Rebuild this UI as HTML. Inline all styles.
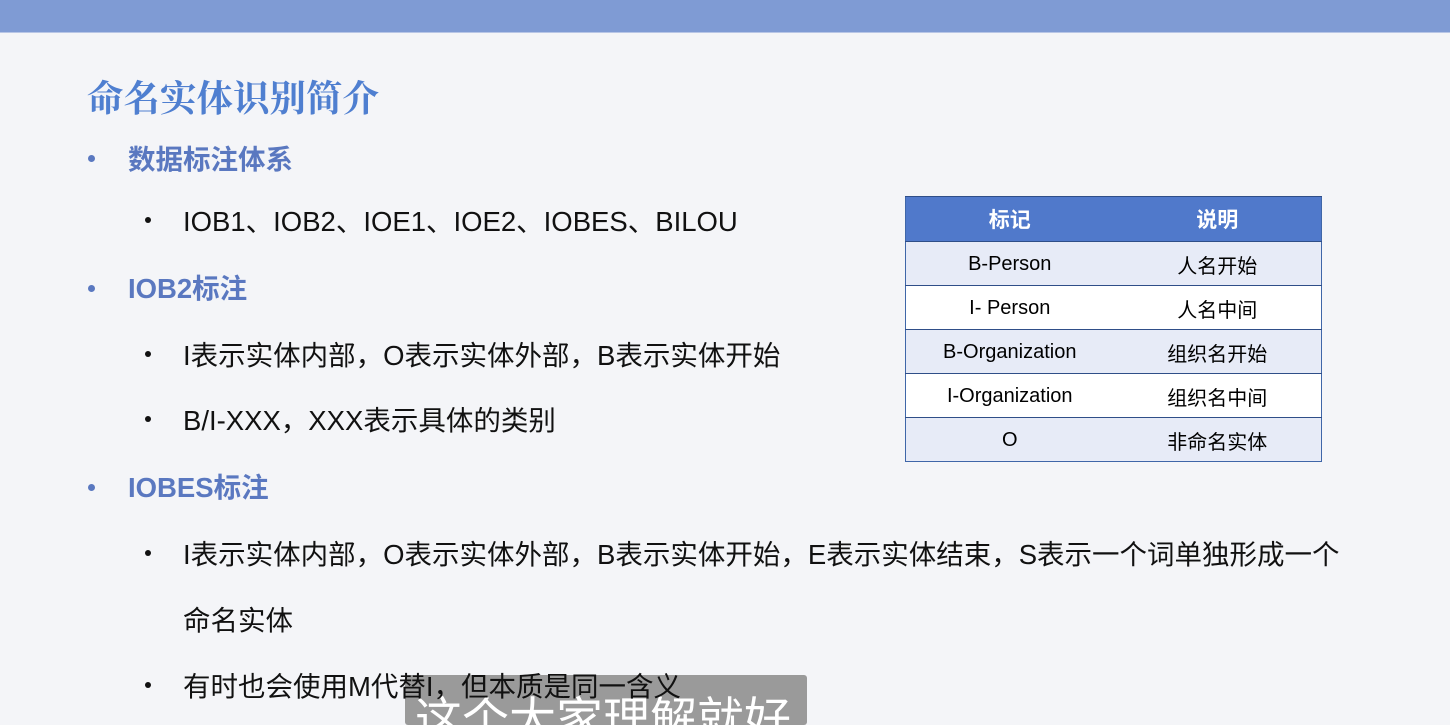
<!DOCTYPE html>
<html><head><meta charset="utf-8"><style>
body{margin:0;width:1450px;height:717px;overflow:hidden;background:#f4f5f8;position:relative;font-family:"Liberation Sans","Noto Sans CJK SC",sans-serif;}
.bar{position:absolute;left:0;top:0;width:1450px;height:32px;background:#7f9bd4;border-bottom:1px solid #b8c6e6;}
.t{position:absolute;white-space:nowrap;z-index:2;}
.title{left:87px;top:70px;font-family:"Noto Serif CJK SC",serif;font-weight:bold;font-size:36.5px;color:#4f7fd0;}
.h{font-size:27.5px;font-weight:bold;color:#5a78c0;}
.b{font-size:27.5px;color:#111;}
.dot1{position:absolute;width:7px;height:7px;border-radius:50%;background:#5a78c0;}
.dot2{position:absolute;width:6px;height:6px;border-radius:50%;background:#111;}
table{position:absolute;left:905px;top:196px;width:417px;border-collapse:collapse;border:1px solid #3f66a8;font-size:20px;table-layout:fixed;}
td,th{text-align:center;padding:0;border-top:1px solid #2f4e88;box-sizing:border-box;}
td{height:44px;padding-top:2px;}
th{background:#5079cb;color:#fff;font-size:21px;height:45px;}
tr.a td{background:#e7ebf7;} tr.w td{background:#fff;}
.cap{position:absolute;left:405px;top:675px;width:402px;height:50px;background:#9a9a9a;border-radius:3px;overflow:hidden;z-index:1;}
.cap span{position:absolute;left:10px;top:6px;font-size:47px;color:#fff;white-space:nowrap;}
</style></head><body>
<div class="bar"></div>
<div class="t title">命名实体识别简介</div>
<div class="dot1" style="left:88px;top:155px"></div><div class="t h" style="left:128px;top:137px">数据标注体系</div>
<div class="dot2" style="left:145px;top:217px"></div><div class="t b" style="left:183px;top:199px">IOB1、IOB2、IOE1、IOE2、IOBES、BILOU</div>
<div class="dot1" style="left:88px;top:285px"></div><div class="t h" style="left:128px;top:266px">IOB2标注</div>
<div class="dot2" style="left:145px;top:351px"></div><div class="t b" style="left:183px;top:333px">I表示实体内部，O表示实体外部，B表示实体开始</div>
<div class="dot2" style="left:145px;top:416px"></div><div class="t b" style="left:183px;top:398px">B/I-XXX，XXX表示具体的类别</div>
<div class="dot1" style="left:88px;top:484px"></div><div class="t h" style="left:128px;top:465px">IOBES标注</div>
<div class="dot2" style="left:145px;top:550px"></div><div class="t b" style="left:183px;top:532px">I表示实体内部，O表示实体外部，B表示实体开始，E表示实体结束，S表示一个词单独形成一个</div>
<div class="t b" style="left:183px;top:598px">命名实体</div>
<div class="dot2" style="left:145px;top:682px"></div><div class="t b" style="left:183px;top:664px">有时也会使用M代替I，但本质是同一含义</div>
<table>
<tr><th>标记</th><th>说明</th></tr>
<tr class="a"><td>B-Person</td><td>人名开始</td></tr>
<tr class="w"><td>I- Person</td><td>人名中间</td></tr>
<tr class="a"><td>B-Organization</td><td>组织名开始</td></tr>
<tr class="w"><td>I-Organization</td><td>组织名中间</td></tr>
<tr class="a"><td>O</td><td>非命名实体</td></tr>
</table>
<div class="cap"><span>这个大家理解就好</span></div>
</body></html>
